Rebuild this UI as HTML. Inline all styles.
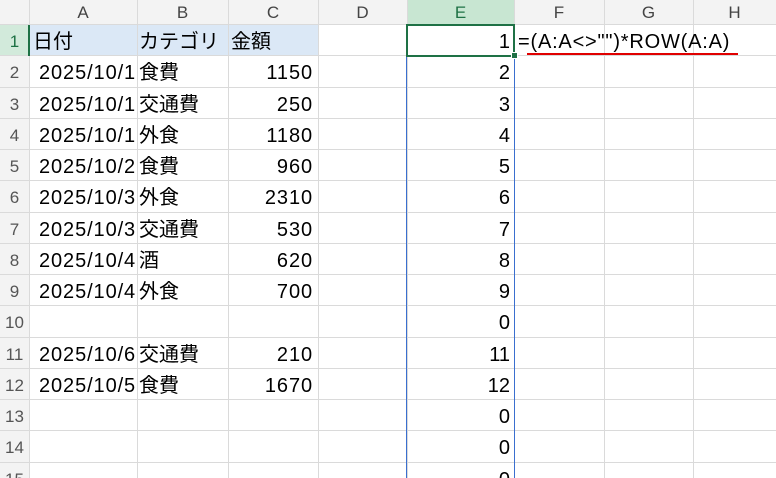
<!DOCTYPE html>
<html><head><meta charset="utf-8"><style>
html,body{margin:0;width:776px;height:478px;overflow:hidden}
body{background:#fff;font-family:"Liberation Sans","Noto Sans CJK JP",sans-serif;position:relative}
.d{position:absolute}
.hl{position:absolute;left:0;width:776px;height:1px;background:#dadada}
.vl{position:absolute;top:0;height:478px;width:1px;background:#dadada}
.ch{position:absolute;top:0;height:24px;line-height:26px;text-align:center;font-size:17px;color:#444}
.rh{position:absolute;left:0;width:29px;text-align:center;font-size:17px;color:#555}
.c{position:absolute;font-size:20px;color:#000;white-space:nowrap}
.n{letter-spacing:0.9px}
</style></head><body>
<div class="d" style="left:0;top:0;width:776px;height:24px;background:#f3f3f3"></div>
<div class="d" style="left:0;top:0;width:29px;height:478px;background:#f3f3f3"></div>
<div class="d" style="left:407px;top:0;width:107px;height:24px;background:#c8e6d2"></div>
<div class="d" style="left:0;top:25px;width:29px;height:31px;background:#d2eadb"></div>
<div class="d" style="left:30px;top:25px;width:288px;height:31px;background:#dbe8f6"></div>
<div id="g"></div>
<script>
var xs=[29,137,228,318,407,514,604,693],h='';
xs.forEach(function(x){h+='<div class="vl" style="left:'+x+'px"></div>'});
for(var i=0;i<15;i++){var y=24+i*31.25;h+='<div class="hl" style="top:'+y+'px"></div>';
h+='<div class="rh" style="top:'+(y+1)+'px;height:31px;line-height:33px;'+(i==0?'color:#1e7145':'')+'">'+(i+1)+'</div>';}
var L='ABCDEFGH';for(var j=0;j<8;j++){var r=j<7?xs[j+1]:776;h+='<div class="ch" style="left:'+xs[j]+'px;width:'+(r-xs[j])+'px;'+(j==4?'color:#1e7145':'')+'">'+L[j]+'</div>';}
var data=[["日付","カテゴリ","金額"],["2025/10/1","食費","1150"],["2025/10/1","交通費","250"],["2025/10/1","外食","1180"],["2025/10/2","食費","960"],["2025/10/3","外食","2310"],["2025/10/3","交通費","530"],["2025/10/4","酒","620"],["2025/10/4","外食","700"],["","",""],["2025/10/6","交通費","210"],["2025/10/5","食費","1670"],["","",""],["","",""],["","",""]];
var e=["1","2","3","4","5","6","7","8","9","0","11","12","0","0","0"];
data.forEach(function(r,i){var y=24+i*31.25+1;var s='top:'+y+'px;height:31px;line-height:34px;';
h+='<div class="c'+(i?' n':'')+'" style="'+s+'left:'+(i==0?33:39)+'px">'+r[0]+'</div>';
h+='<div class="c" style="'+s+'left:139px">'+r[1]+'</div>';
if(i==0)h+='<div class="c" style="'+s+'left:231px">'+r[2]+'</div>';else h+='<div class="c n" style="'+s+'left:228px;width:85px;text-align:right">'+r[2]+'</div>';
h+='<div class="c" style="'+s+'left:407px;width:103px;text-align:right">'+e[i]+'</div>';});
document.getElementById('g').innerHTML=h;
</script>
<div class="d" style="left:406px;top:56px;width:1px;height:422px;background:#3a6fcf"></div>
<div class="d" style="left:514px;top:56px;width:1px;height:422px;background:#3a6fcf"></div>
<div class="d" style="left:28px;top:25px;width:2px;height:31px;background:#1e7145"></div>
<div class="d" style="left:406px;top:24px;width:105px;height:29px;border:2px solid #1e7145"></div>
<div class="d" style="left:511px;top:52px;width:5px;height:5px;background:#1e7145;border:1px solid #fff"></div>
<div class="c" style="left:518px;top:25px;height:31px;line-height:34px;letter-spacing:0.8px">=(A:A&lt;&gt;"")*ROW(A:A)</div>
<div class="d" style="left:527px;top:53px;width:211px;height:2px;background:#e00000"></div>
</body></html>
